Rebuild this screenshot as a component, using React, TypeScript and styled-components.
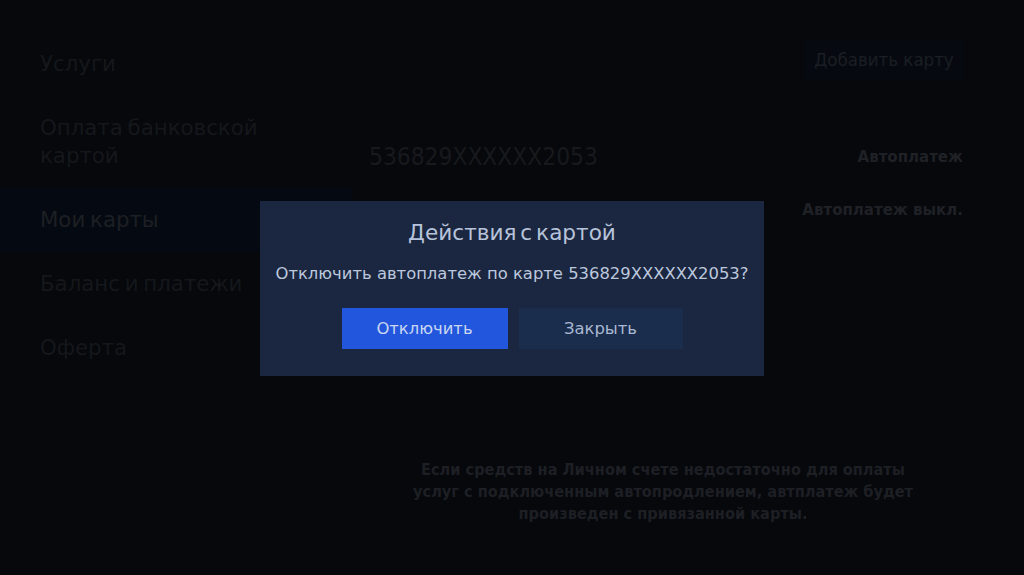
import React from 'react'
import styled, { createGlobalStyle } from 'styled-components'

const GlobalStyle = createGlobalStyle`
  html, body {
    margin: 0;
    padding: 0;
    background: #06080c;
  }
  * {
    box-sizing: border-box;
  }
`

const Screen = styled.div`
  position: relative;
  width: 1024px;
  height: 575px;
  overflow: hidden;
  display: flex;
  background: #06080c;
  font-family: 'DejaVu Sans', 'Noto Sans', sans-serif;
`

const Sidebar = styled.nav`
  width: 352px;
  flex-shrink: 0;
  display: flex;
  flex-direction: column;
  padding-top: 32px;
`

const MenuItem = styled.div<{ $active?: boolean }>`
  padding: 18px 40px;
  font-size: 21.3px;
  line-height: 28px;
  word-spacing: -2px;
  color: ${p => (p.$active ? '#1d1f23' : '#15171b')};
  background: ${p => (p.$active ? '#050a12' : 'transparent')};
`

const Content = styled.main`
  flex: 1;
  display: flex;
  flex-direction: column;
  padding: 39px 61px 0 17px;
`

const TopBar = styled.div`
  display: flex;
  justify-content: flex-end;
`

const AddButton = styled.div`
  width: 158px;
  height: 41px;
  display: flex;
  align-items: center;
  justify-content: center;
  background: #060a10;
  color: #1b1e23;
  font-family: 'DejaVu Sans Condensed', 'DejaVu Sans', sans-serif;
  font-stretch: condensed;
  font-size: 18.5px;
`

const CardRow = styled.div`
  display: flex;
  justify-content: space-between;
  align-items: center;
  margin-top: 61px;
  height: 30px;
`

const CardNumber = styled.div`
  font-family: 'DejaVu Sans Condensed', 'DejaVu Sans', sans-serif;
  font-stretch: condensed;
  font-size: 24.3px;
  color: #17191d;
`

const Label = styled.div`
  font-family: 'DejaVu Sans Condensed', 'DejaVu Sans', sans-serif;
  font-stretch: condensed;
  font-weight: bold;
  font-size: 16.7px;
  color: #1f2126;
`

const StatusRow = styled.div`
  display: flex;
  justify-content: flex-end;
  margin-top: 28px;
  height: 20px;
  align-items: center;
`

const Note = styled.p`
  margin: 240px 0 0 0;
  padding-right: 6px;
  text-align: center;
  font-family: 'DejaVu Sans Condensed', 'DejaVu Sans', sans-serif;
  font-stretch: condensed;
  font-weight: bold;
  font-size: 16.2px;
  line-height: 22px;
  color: #1d1f24;
`

const Overlay = styled.div`
  position: absolute;
  inset: 0;
  display: flex;
  align-items: center;
  justify-content: center;
`

const Dialog = styled.div`
  width: 504px;
  height: 175px;
  margin-top: 2px;
  background: #1b2640;
  display: flex;
  flex-direction: column;
  align-items: center;
  padding-top: 17px;
`

const DialogTitle = styled.div`
  font-size: 21.6px;
  line-height: 30px;
  word-spacing: -3px;
  color: #b6c3da;
`

const DialogText = styled.div`
  margin-top: 16px;
  font-size: 16.4px;
  line-height: 20px;
  color: #bcc8dd;
`

const Buttons = styled.div`
  display: flex;
  gap: 11px;
  margin-top: 24px;
`

const Button = styled.div<{ $primary?: boolean }>`
  width: ${p => (p.$primary ? '166px' : '164px')};
  height: 41px;
  display: flex;
  align-items: center;
  justify-content: center;
  font-size: 16.4px;
  background: ${p => (p.$primary ? '#2257dd' : '#1b2d4d')};
  color: ${p => (p.$primary ? '#c9d6f2' : '#a9b8d2')};
`

const menu = [
  'Услуги',
  'Оплата банковской картой',
  'Мои карты',
  'Баланс и платежи',
  'Оферта',
]

const App = (): JSX.Element => (
  <>
    <GlobalStyle />
    <Screen>
      <Sidebar>
        {menu.map(item => (
          <MenuItem key={item} $active={item === 'Мои карты'}>
            {item === 'Оплата банковской картой' ? (
              <>
                Оплата банковской
                <br />
                картой
              </>
            ) : (
              item
            )}
          </MenuItem>
        ))}
      </Sidebar>
      <Content>
        <TopBar>
          <AddButton>Добавить карту</AddButton>
        </TopBar>
        <CardRow>
          <CardNumber>536829XXXXXX2053</CardNumber>
          <Label>Автоплатеж</Label>
        </CardRow>
        <StatusRow>
          <Label>Автоплатеж выкл.</Label>
        </StatusRow>
        <Note>
          Если средств на Личном счете недостаточно для оплаты
          <br />
          услуг с подключенным автопродлением, автплатеж будет
          <br />
          произведен с привязанной карты.
        </Note>
      </Content>
      <Overlay>
        <Dialog>
          <DialogTitle>Действия с картой</DialogTitle>
          <DialogText>Отключить автоплатеж по карте 536829XXXXXX2053?</DialogText>
          <Buttons>
            <Button $primary>Отключить</Button>
            <Button>Закрыть</Button>
          </Buttons>
        </Dialog>
      </Overlay>
    </Screen>
  </>
)

export default App
